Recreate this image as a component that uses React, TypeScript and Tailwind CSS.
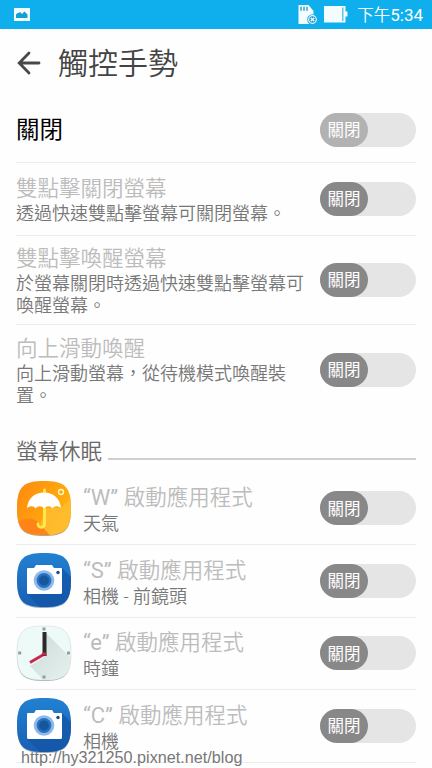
import type { ReactNode } from 'react';

const gestures = [
  { title: '雙點擊關閉螢幕', desc: '透過快速雙點擊螢幕可關閉螢幕。', height: 'h-[73px]' },
  { title: '雙點擊喚醒螢幕', desc: '於螢幕關閉時透過快速雙點擊螢幕可喚醒螢幕。', height: 'h-[89px]' },
  { title: '向上滑動喚醒', desc: '向上滑動螢幕，從待機模式喚醒裝置。', height: 'h-[90px]' },
];

const apps = [
  { letter: 'W', name: '天氣', icon: <WeatherIcon /> },
  { letter: 'S', name: '相機 - 前鏡頭', icon: <CameraIcon id="front" /> },
  { letter: 'e', name: '時鐘', icon: <ClockIcon /> },
  { letter: 'C', name: '相機', icon: <CameraIcon id="rear" /> },
];

function Toggle({ muted = false }: { muted?: boolean }) {
  return (
    <div className="h-[34px] w-24 shrink-0 rounded-full bg-[#e5e5e5]">
      <div
        className={`flex h-full w-12 items-center justify-center rounded-full pt-[3px] text-[16.5px] leading-none font-normal text-white ${muted ? 'bg-[#b2b2b2]' : 'bg-[#888888]'}`}
      >
        關閉
      </div>
    </div>
  );
}

function IconFrame({ children }: { children: ReactNode }) {
  return (
    <svg viewBox="0 0 56 57" className="h-[57px] w-14 shrink-0">
      {children}
    </svg>
  );
}

// Rounded tile outline shared by all launcher icons
const TILE = 'M28 1C9 1 1 5 1 28s8 27 27 27 27-4 27-27S47 1 28 1Z';

function WeatherIcon() {
  return (
    <IconFrame>
      <defs>
        <linearGradient id="sun" x1="0" y1="0" x2="1" y2="0.6">
          <stop offset="0" stopColor="#ff8710" />
          <stop offset="1" stopColor="#ffb50c" />
        </linearGradient>
        <clipPath id="weather-tile"><path d={TILE} /></clipPath>
      </defs>
      <path d={TILE} transform="translate(0 1)" fill="#b9a48c" />
      <path d={TILE} fill="url(#sun)" />
      <g clipPath="url(#weather-tile)">
        <path d="M0 43 C8 38 17 36 24 44 L35 56 H0Z" fill="#ff8418" />
        <path d="M45 28 L55 18 V56 H35 L24 45 L30 28Z" fill="#ffc13c" opacity=".65" />
      </g>
      <path d="M28.500 10v4M28.500 28v15.500c0 5-6.500 5-6.500 .5" fill="none" stroke="#ffe94b" strokeWidth="2.800" strokeLinecap="round" />
      <path d="M11 28C12 18 19 12.500 28 12.500s16 5.500 17 15.500c-3-2.500-7-2.500-8.500 .5-2-3-6-3-8.500 0-2.500-3-6.500-3-8.500 0-1.500-3-5.500-3-8.500-.5Z" fill="#fff" />
      <circle cx="45" cy="12" r="2.500" fill="none" stroke="#fffbc8" strokeWidth="1.300" />
    </IconFrame>
  );
}

function CameraIcon({ id }: { id: string }) {
  return (
    <IconFrame>
      <defs>
        <linearGradient id={`${id}-blue`} x1="0" y1="0" x2="0" y2="1">
          <stop offset="0" stopColor="#2281d2" />
          <stop offset="1" stopColor="#185fb4" />
        </linearGradient>
        <clipPath id={`${id}-tile`}><path d={TILE} /></clipPath>
      </defs>
      <path d={TILE} transform="translate(0 1)" fill="#9bacc2" />
      <path d={TILE} fill={`url(#${id}-blue)`} />
      <path d="M46 16 L56 26 V56 H25 L11 42Z" fill="#1454a5" opacity=".7" clipPath={`url(#${id}-tile)`} />
      <path d="M12 16h6l2-3h16l2 3h7q1 0 1 1v23.500q0 1.500-1.500 1.500h-32Q11 42 11 40.500V17q0-1 1-1Z" fill="#fff" />
      <circle cx="28" cy="28.500" r="10.300" fill="#8db9ee" />
      <circle cx="28" cy="28.500" r="7.400" fill="#2871bd" />
      <circle cx="28" cy="28.500" r="5" fill="#15579f" />
      <circle cx="42" cy="20.500" r="1.700" fill="#184a87" />
    </IconFrame>
  );
}

function ClockIcon() {
  return (
    <IconFrame>
      <defs>
        <clipPath id="clock-tile"><path d={TILE} /></clipPath>
        <linearGradient id="hand-shade" x1="0" y1="0" x2="1" y2="1">
          <stop offset="0" stopColor="#cbdad8" />
          <stop offset="1" stopColor="#e6f2f0" />
        </linearGradient>
      </defs>
      <path d={TILE} transform="translate(0 .9)" fill="#a8b3b1" />
      <path d={TILE} fill="#eefaf8" stroke="#d2dddb" strokeWidth=".6" />
      <path d="M30 8 L56 34 V56 H28 L14 41 L28 32Z" fill="url(#hand-shade)" clipPath="url(#clock-tile)" />
      <path d="M26.500 2.500h3v3h-3ZM26.500 50.500h3v3h-3ZM2.200 26.500h3v3h-3ZM51 26.500h3v3h-3Z" fill="#929d9d" />
      <path d="M28.500 29 14 37.500" stroke="#c8284b" strokeWidth="3" />
      <path d="M28.500 7v24" stroke="#29292b" strokeWidth="4" />
      <path d="M26.500 27.500q2-1 4 1v2h-4Z" fill="#c8284b" />
    </IconFrame>
  );
}

function StatusBar() {
  return (
    <div className="flex h-[29px] items-center bg-[#0fafee] font-normal text-white">
      <svg viewBox="0 0 16 14" className="ml-[14px] h-3.5 w-4">
        <path d="M0 0h16v13H0Z" fill="#f3fcff" />
        <path d="M2 10V6.500l1.500-1.500h1l1.500-1 2 2 2.500-2.500 3 3V10Z" fill="#149fd4" />
      </svg>
      <svg viewBox="0 0 21 21" className="ml-auto h-[21px] w-[21px]">
        <path d="M1.500 1h10l5 6v13h-15Z" fill="#f3fcff" />
        <path d="M4 2.800v4M7 2.800v4M10 2.800v4" stroke="#1694c6" strokeWidth="1.300" />
        <circle cx="15.500" cy="15.500" r="5.300" fill="#0fafee" />
        <circle cx="15.500" cy="15.500" r="3.800" fill="#1694c6" stroke="#f3fcff" strokeWidth="1.200" />
        <path d="m13.700 13.700 3.600 3.600m0-3.600-3.600 3.600" stroke="#fff" strokeWidth="1.300" />
      </svg>
      <svg viewBox="0 0 24 17" className="ml-[6px] h-[17px] w-6">
        <path d="M0 0h21.500v5.500H23.500v5h-2v6H0Z" fill="#f3fcff" />
        <path d="M18.800 1.500v13.500" stroke="#42b5de" strokeWidth="1.200" />
      </svg>
      <span className="mr-[9px] ml-[9px] pt-[2px] text-[16.5px] leading-none font-[350] whitespace-nowrap">
        下午<span className="text-[17px] font-normal">5:34</span>
      </span>
    </div>
  );
}

export default function App() {
  return (
    <div className="relative h-[768px] w-[432px] overflow-hidden bg-[#fefefe] font-[Roboto,'Noto_Sans_CJK_TC',sans-serif] font-[350]">
      <StatusBar />

      <header className="flex h-[68px] items-center pl-[17px]">
        <svg viewBox="0 0 24 24" className="h-6 w-6" fill="none" stroke="#494949" strokeWidth="2.800" strokeLinecap="round">
          <path d="M22 12H2.500M12 2 2.200 12 12 22" />
        </svg>
        <h1 className="ml-[17px] pt-0.5 text-[30px] leading-none text-[#444444]">觸控手勢</h1>
      </header>

      <main className="px-4">
        <div className="flex h-[66px] items-center justify-between border-b border-[#ececec]">
          <span className="pt-[3px] text-[23.5px] leading-none font-normal text-black">關閉</span>
          <Toggle muted />
        </div>

        {gestures.map((g, i) => (
          <div
            key={g.title}
            className={`flex items-center justify-between ${g.height} ${i < gestures.length - 1 ? 'border-b border-[#ececec]' : ''}`}
          >
            <div className="w-[290px] pt-px">
              <h2 className="text-[21.5px] leading-[29px] text-[#bcbcbc]">{g.title}</h2>
              <p className="text-[18px] leading-[22px] text-[#777777]">{g.desc}</p>
            </div>
            <Toggle />
          </div>
        ))}

        <div className="flex h-[57.5px] items-end gap-1.5 pb-[7px]">
          <h2 className="text-[21.5px] leading-[29px] text-[#686868]">螢幕休眠</h2>
          <div className="mb-[6px] h-0.5 flex-1 bg-[#cfcfcf]" />
        </div>

        {apps.map(app => (
          <div key={app.letter} className="flex h-[72.5px] items-center border-b border-[#ececec]">
            {app.icon}
            <div className="ml-[11px] flex-1 pt-[2px] whitespace-nowrap">
              <h3 className="text-[21.5px] leading-[29px] text-[#bcbcbc]">
                <span className="text-[22px] font-normal">“{app.letter}” </span>啟動應用程式
              </h3>
              <p className="text-[18px] leading-[23px] text-[#777777]">{app.name}</p>
            </div>
            <Toggle />
          </div>
        ))}
      </main>

      {/* Blog watermark overlaps the last row */}
      <span className="absolute top-[748px] left-[21px] font-['Liberation_Sans',sans-serif] text-[16.2px] leading-[18px] font-normal whitespace-nowrap text-[#777777] [text-shadow:1px_1px_0_#ffffff]">
        http://hy321250.pixnet.net/blog
      </span>
    </div>
  );
}
